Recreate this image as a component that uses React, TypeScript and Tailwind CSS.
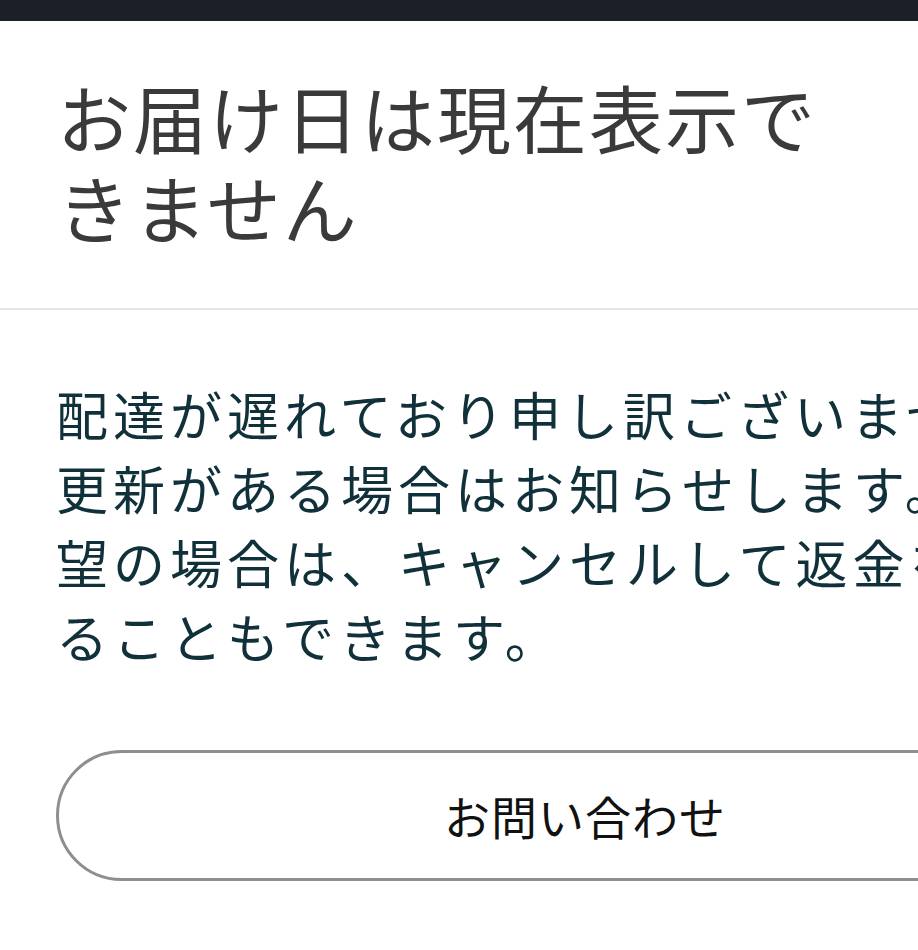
import React from 'react';

const bodyLines = [
  '配達が遅れており申し訳ございません。',
  '更新がある場合はお知らせします。ご希',
  '望の場合は、キャンセルして返金を受け取',
  'ることもできます。',
];

export default function App() {
  return (
    <div
      className="h-[950px] w-full overflow-hidden bg-white"
      style={{ fontFamily: '"Noto Sans CJK JP", "Noto Sans", sans-serif' }}
    >
      <div className="w-[1170px]">
        {/* status strip */}
        <div className="h-[21px] bg-[#1b1f28]" />

        {/* header */}
        <div className="px-[57px] pt-[50px] pb-[57px]">
          <h1 className="w-[800px] text-[74px] leading-[90px] tracking-[2px] font-normal text-[#3a3a3a]">
            お届け日は現在表示できません
          </h1>
        </div>

        <div className="h-[2px] bg-[#e6e6e6]" />

        {/* message */}
        <div className="px-[56px] pt-[67px]">
          <p className="text-[52px] leading-[74px] tracking-[5px] text-[#10303a] whitespace-nowrap">
            {bodyLines.map((line, i) => (
              <React.Fragment key={i}>
                {line}
                {i < bodyLines.length - 1 && <br />}
              </React.Fragment>
            ))}
          </p>

          <button className="mt-[77px] flex h-[131px] w-full items-center justify-center rounded-full border-[3px] border-[#8e8e8e] bg-white text-[46px] tracking-[1px] text-[#111111]">
            お問い合わせ
          </button>
        </div>
      </div>
    </div>
  );
}
